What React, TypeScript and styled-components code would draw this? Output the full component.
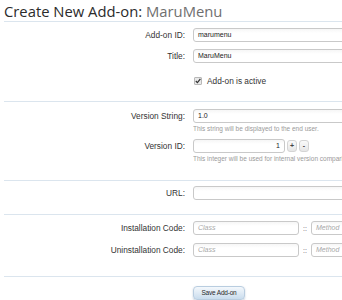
import styled, { createGlobalStyle } from 'styled-components';

const GlobalStyle = createGlobalStyle`
    html, body {
        margin: 0;
        padding: 0;
        background: #ffffff;
        overflow: hidden;
    }
    body {
        font-family: "Liberation Sans", Arial, sans-serif;
        color: #333333;
    }
`;

const Page = styled.div`
    width: 342px;
    height: 300px;
    padding: 0 0 0 4px;
    box-sizing: border-box;
    overflow: hidden;
`;

const Heading = styled.h1`
    margin: 0;
    height: 21px;
    border-bottom: 1px solid #dbe5ee;
    font-family: "Open Sans", sans-serif;
    font-weight: 400;
    font-size: 14.8px;
    line-height: 22px;
    color: #2b2b2b;
    white-space: nowrap;
    span {
        color: #6f6f6f;
    }
`;

const Fieldset = styled.div<{ $top: number; $bottom: number }>`
    padding: ${p => p.$top}px 0 ${p => p.$bottom}px;
    border-bottom: 1px solid #dbe5ee;
    display: flex;
    flex-direction: column;
`;

const Row = styled.div<{ $gap?: number }>`
    display: grid;
    grid-template-columns: 181px 1fr;
    column-gap: 8px;
    margin-top: ${p => p.$gap ?? 0}px;
`;

const Label = styled.label`
    text-align: right;
    font-size: 8.3px;
    line-height: 14px;
    color: #333333;
    white-space: nowrap;
`;

const Control = styled.div`
    display: flex;
    flex-direction: column;
    min-width: 0;
    overflow: hidden;
`;

const Inline = styled.div`
    display: flex;
    align-items: center;
    white-space: nowrap;
`;

const TextBox = styled.div<{ $width?: number; $align?: string; $placeholder?: boolean }>`
    box-sizing: border-box;
    height: 14px;
    width: ${p => (p.$width ? `${p.$width}px` : '200px')};
    flex: none;
    border: 1px solid #c9c9c9;
    border-radius: 3px;
    background: linear-gradient(to bottom, #f6f6f6 0, #ffffff 4px);
    padding: 0 4px;
    font-size: 7px;
    line-height: 12px;
    text-align: ${p => p.$align ?? 'left'};
    color: ${p => (p.$placeholder ? '#a8a8a8' : '#222')};
    font-style: ${p => (p.$placeholder ? 'italic' : 'normal')};
    white-space: nowrap;
    overflow: hidden;
`;

const Hint = styled.div`
    font-size: 6.5px;
    line-height: 9px;
    color: #9a9a9a;
    margin-top: 1px;
    white-space: nowrap;
`;

const SpinButton = styled.div`
    width: 10px;
    height: 12px;
    margin-left: 2px;
    box-sizing: border-box;
    border: 1px solid #d4d4d4;
    border-radius: 3px;
    background: linear-gradient(to bottom, #fafafa, #e6e6e6);
    font-size: 7px;
    line-height: 10px;
    text-align: center;
    color: #444;
    font-weight: bold;
`;

const Sep = styled.span`
    font-size: 7px;
    color: #555;
    margin: 0 3px 0 3px;
    width: 6px;
    text-align: center;
`;

const CheckRow = styled.div`
    display: flex;
    align-items: center;
    height: 12px;
    font-size: 8.3px;
    color: #333333;
    margin-top: 12px;
    white-space: nowrap;
`;

const Check = styled.span`
    width: 6px;
    height: 6px;
    margin: 0 5px 0 1px;
    border: 1px solid #b8b8b8;
    border-radius: 1px;
    background: #e9e9e9;
    display: flex;
    align-items: center;
    justify-content: center;
`;

const ButtonBar = styled.div`
    padding: 4px 0 0 189px;
`;

const SaveButton = styled.button`
    width: 52px;
    height: 14px;
    padding: 0;
    border: 1px solid #b9cde0;
    border-radius: 4px;
    background: linear-gradient(to bottom, #f4f8fc 0%, #dde9f4 55%, #c9dced 100%);
    box-shadow: 0 1px 2px rgba(80, 110, 140, 0.35);
    font-family: "Liberation Sans", Arial, sans-serif;
    font-size: 6.5px;
    color: #2a2a2a;
    letter-spacing: -0.2px;
`;

const App = () => {
    return (
        <Page>
            <GlobalStyle />
            <Heading>Create New Add-on: <span>MaruMenu</span></Heading>

            <Fieldset $top={6} $bottom={14}>
                <Row>
                    <Label>Add-on ID:</Label>
                    <Control><TextBox>marumenu</TextBox></Control>
                </Row>
                <Row $gap={7}>
                    <Label>Title:</Label>
                    <Control><TextBox>MaruMenu</TextBox></Control>
                </Row>
                <Row>
                    <span />
                    <CheckRow>
                        <Check>
                            <svg width="6" height="6" viewBox="0 0 6 6">
                                <path d="M0.8 3 L2.4 4.7 L5.4 0.8" stroke="#333" strokeWidth="1.2" fill="none" />
                            </svg>
                        </Check>
                        Add-on is active
                    </CheckRow>
                </Row>
            </Fieldset>

            <Fieldset $top={7} $bottom={17}>
                <Row>
                    <Label>Version String:</Label>
                    <Control>
                        <TextBox>1.0</TextBox>
                        <Hint>This string will be displayed to the end user.</Hint>
                    </Control>
                </Row>
                <Row $gap={6}>
                    <Label>Version ID:</Label>
                    <Control>
                        <Inline>
                            <TextBox $width={92} $align="right">1</TextBox>
                            <SpinButton>+</SpinButton>
                            <SpinButton>-</SpinButton>
                        </Inline>
                        <Hint>This integer will be used for internal version comparisons.</Hint>
                    </Control>
                </Row>
            </Fieldset>

            <Fieldset $top={5} $bottom={14}>
                <Row>
                    <Label>URL:</Label>
                    <Control><TextBox /></Control>
                </Row>
            </Fieldset>

            <Fieldset $top={6} $bottom={19}>
                <Row>
                    <Label>Installation Code:</Label>
                    <Inline>
                        <TextBox $width={106} $placeholder>Class</TextBox>
                        <Sep>::</Sep>
                        <TextBox $width={100} $placeholder>Method</TextBox>
                    </Inline>
                </Row>
                <Row $gap={8}>
                    <Label>Uninstallation Code:</Label>
                    <Inline>
                        <TextBox $width={106} $placeholder>Class</TextBox>
                        <Sep>::</Sep>
                        <TextBox $width={100} $placeholder>Method</TextBox>
                    </Inline>
                </Row>
            </Fieldset>

            <ButtonBar>
                <SaveButton>Save Add-on</SaveButton>
            </ButtonBar>
        </Page>
    );
};

export default App;
